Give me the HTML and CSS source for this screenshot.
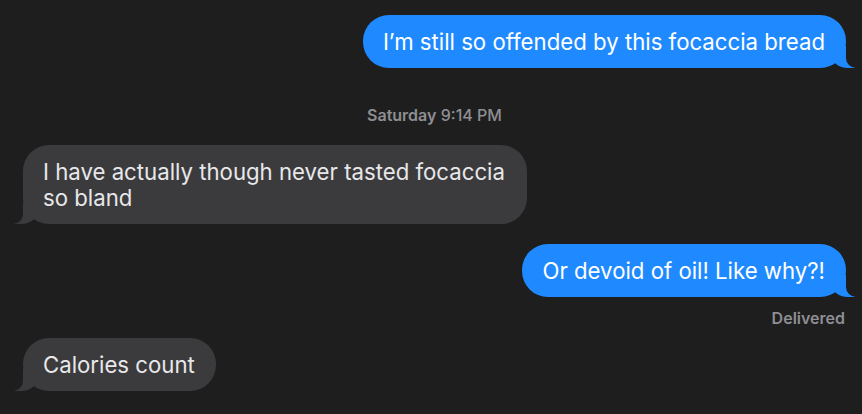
FILE: index.html
```html
<!DOCTYPE html>
<html lang="en">
<head>
<meta charset="utf-8">
<title>Messages</title>
<link rel="stylesheet" href="styles.css">
</head>
<body>
<main class="thread">
  <div class="bubble sent">I’m still so offended by this focaccia bread</div>
  <div class="timestamp"><span class="day">Saturday</span> 9:14 PM</div>
  <div class="bubble received wide">I have actually though never tasted focaccia so bland</div>
  <div class="bubble sent gap">Or devoid of oil! Like why?!</div>
  <div class="status">Delivered</div>
  <div class="bubble received">Calories count</div>
</main>
</body>
</html>
```

FILE: styles.css
```css
html, body {
  margin: 0;
  padding: 0;
  background: #1e1e1e;
}

body {
  font-family: Inter, "Liberation Sans", Arial, sans-serif;
  -webkit-font-smoothing: antialiased;
}

.thread {
  display: flex;
  flex-direction: column;
  padding: 15px 16px 0 23px;
}

.bubble {
  position: relative;
  font-size: 22.2px;
  line-height: 26px;
  padding: 13.5px 21px 13.5px 20px;
  border-radius: 26px;
  box-sizing: border-box;
}

.sent {
  align-self: flex-end;
  background: #1f8aff;
  color: #ffffff;
}

.received {
  align-self: flex-start;
  background: #3b3b3d;
  color: #e8e8ea;
}

.wide {
  width: 504px;
}

.gap {
  margin-top: 20px;
}

/* tails */
.sent::before,
.sent::after,
.received::before,
.received::after {
  content: "";
  position: absolute;
  bottom: 0;
  height: 22px;
}

.sent::before {
  right: -9px;
  width: 24px;
  background: #1f8aff;
  border-bottom-left-radius: 17px 14px;
}

.sent::after {
  right: -26px;
  width: 26px;
  background: #1e1e1e;
  border-bottom-left-radius: 10px;
}

.received::before {
  left: -9px;
  width: 24px;
  background: #3b3b3d;
  border-bottom-right-radius: 17px 14px;
}

.received::after {
  left: -26px;
  width: 26px;
  background: #1e1e1e;
  border-bottom-right-radius: 10px;
}

.timestamp {
  margin: 37px 0 20px;
  text-align: center;
  font-size: 16px;
  line-height: 20px;
  font-weight: 500;
  color: #8e8e93;
}

.day {
  font-weight: 600;
}

.status {
  align-self: flex-end;
  margin: 11px 1px 10px 0;
  font-size: 16px;
  line-height: 20px;
  font-weight: 600;
  color: #8e8e93;
}
```
